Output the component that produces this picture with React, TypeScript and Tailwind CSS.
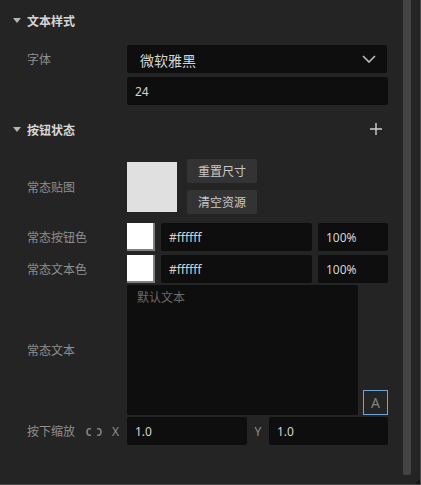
const FONT = "font-['Noto_Sans','Noto_Sans_CJK_SC',sans-serif]";

function Field({ className = "", children }: { className?: string; children?: React.ReactNode }) {
  return (
    <div className={`h-[28px] pt-[2px] rounded-[2px] bg-[#0e0e0e] flex items-center text-[12px] text-[#d4d4d4] ${className}`}>
      {children}
    </div>
  );
}

function Label({ children, className = "" }: { children: React.ReactNode; className?: string }) {
  return <div className={`w-[100px] shrink-0 pt-[2px] text-[12px] text-[#8f8f8f] ${className}`}>{children}</div>;
}

function Header({ title, plus }: { title: string; plus?: boolean }) {
  return (
    <div className="h-[22px] flex items-center">
      <svg width="8" height="5" viewBox="0 0 8 5" className="ml-[13px] mr-[6px] mt-[-2px]">
        <path d="M0 0H8L4 5Z" fill="#b5b5b5" />
      </svg>
      <span className="text-[12px] pt-[2px] font-bold text-[#d6d6d6]">{title}</span>
      {plus && (
        <svg width="12" height="12" viewBox="0 0 12 12" className="ml-auto mr-[21px] mt-[-2px]">
          <path d="M6 0V12M0 6H12" stroke="#cfcfcf" strokeWidth="1.4" />
        </svg>
      )}
    </div>
  );
}

function Btn({ children }: { children: React.ReactNode }) {
  return (
    <div className="w-[70px] h-[24px] pt-[2px] rounded-[2px] bg-[#333333] flex items-center justify-center text-[12px] text-[#c8c8c8]">
      {children}
    </div>
  );
}

function ColorRow({ label, className = "" }: { label: string; className?: string }) {
  return (
    <div className={`flex items-center pl-[27px] ${className}`}>
      <Label>{label}</Label>
      <div className="w-[28px] h-[28px] bg-white border-r-2 border-b-2 border-[#808080]" />
      <Field className="w-[151px] ml-[6px] pl-[8px]">#ffffff</Field>
      <Field className="w-[70px] ml-[6px] pl-[8px]">100%</Field>
    </div>
  );
}

export default function App() {
  return (
    <div className={`relative w-[421px] h-[485px] bg-[#242424] border-r border-b border-[#4a4a4a] flex overflow-hidden ${FONT}`}>
      <div className="w-[403px] shrink-0 pt-[10px]">
        <Header title="文本样式" />
        <div className="flex pl-[27px] mt-[13px]">
          <Label className="h-[28px] flex items-center">字体</Label>
          <div className="flex flex-col gap-[4px] w-[261px]">
            <Field className="w-[260px] pl-[13px] pr-[11px] justify-between text-[14px]">
              <span>微软雅黑</span>
              <svg width="14" height="8" viewBox="0 0 14 8" className="mt-[-2px]">
                <path d="M1 1L7 7L13 1" fill="none" stroke="#bdbdbd" strokeWidth="1.6" />
              </svg>
            </Field>
            <Field className="pl-[8px]">24</Field>
          </div>
        </div>
        <div className="mt-[14px]">
          <Header title="按钮状态" plus />
        </div>
        <div className="flex items-center pl-[27px] mt-[18px] h-[55px]">
          <Label>常态贴图</Label>
          <div className="w-[50px] h-[50px] bg-[#e0e0e0]" />
          <div className="flex flex-col gap-[7px] ml-[10px]">
            <Btn>重置尺寸</Btn>
            <Btn>清空资源</Btn>
          </div>
        </div>
        <ColorRow label="常态按钮色" className="mt-[9px]" />
        <ColorRow label="常态文本色" className="mt-[4px]" />
        <div className="flex pl-[27px] mt-[2px] h-[130px]">
          <Label className="self-center">常态文本</Label>
          <div className="w-[231px] h-full rounded-[2px] bg-[#0e0e0e] pl-[10px] pt-[4px] text-[12px] text-[#6a6a6a]">
            默认文本
          </div>
          <div className="self-end ml-[5px] w-[25px] h-[25px] border border-[#6ea4dc] flex items-center justify-center text-[14px] text-[#808080]">
            A
          </div>
        </div>
        <div className="flex items-center pl-[27px] mt-[2px]">
          <div className="w-[59px] pt-[2px] text-[12px] text-[#8f8f8f]">按下缩放</div>
          <svg width="16" height="8" viewBox="0 0 16 8" className="mr-[10px] mt-[1px]">
            <path d="M5 0.8H3.5Q1 0.8 1 4T3.5 7.2H5M11 0.8H12.5Q15 0.8 15 4T12.5 7.2H11" fill="none" stroke="#808080" strokeWidth="1.6" />
          </svg>
          <div className="w-[15px] pt-[2px] text-[12px] text-[#8f8f8f]">X</div>
          <Field className="w-[120px] pl-[8px]">1.0</Field>
          <div className="w-[22px] pt-[2px] text-center text-[12px] text-[#8f8f8f]">Y</div>
          <Field className="w-[119px] pl-[8px]">1.0</Field>
        </div>
      </div>
      <div className="w-[8px] h-[475px] rounded-b-[2px] bg-[#444444]" />
      <svg width="5" height="5" viewBox="0 0 5 5" className="absolute right-0 bottom-0">
        <path d="M5 0V5H0Z" fill="#141414" />
      </svg>
    </div>
  );
}
